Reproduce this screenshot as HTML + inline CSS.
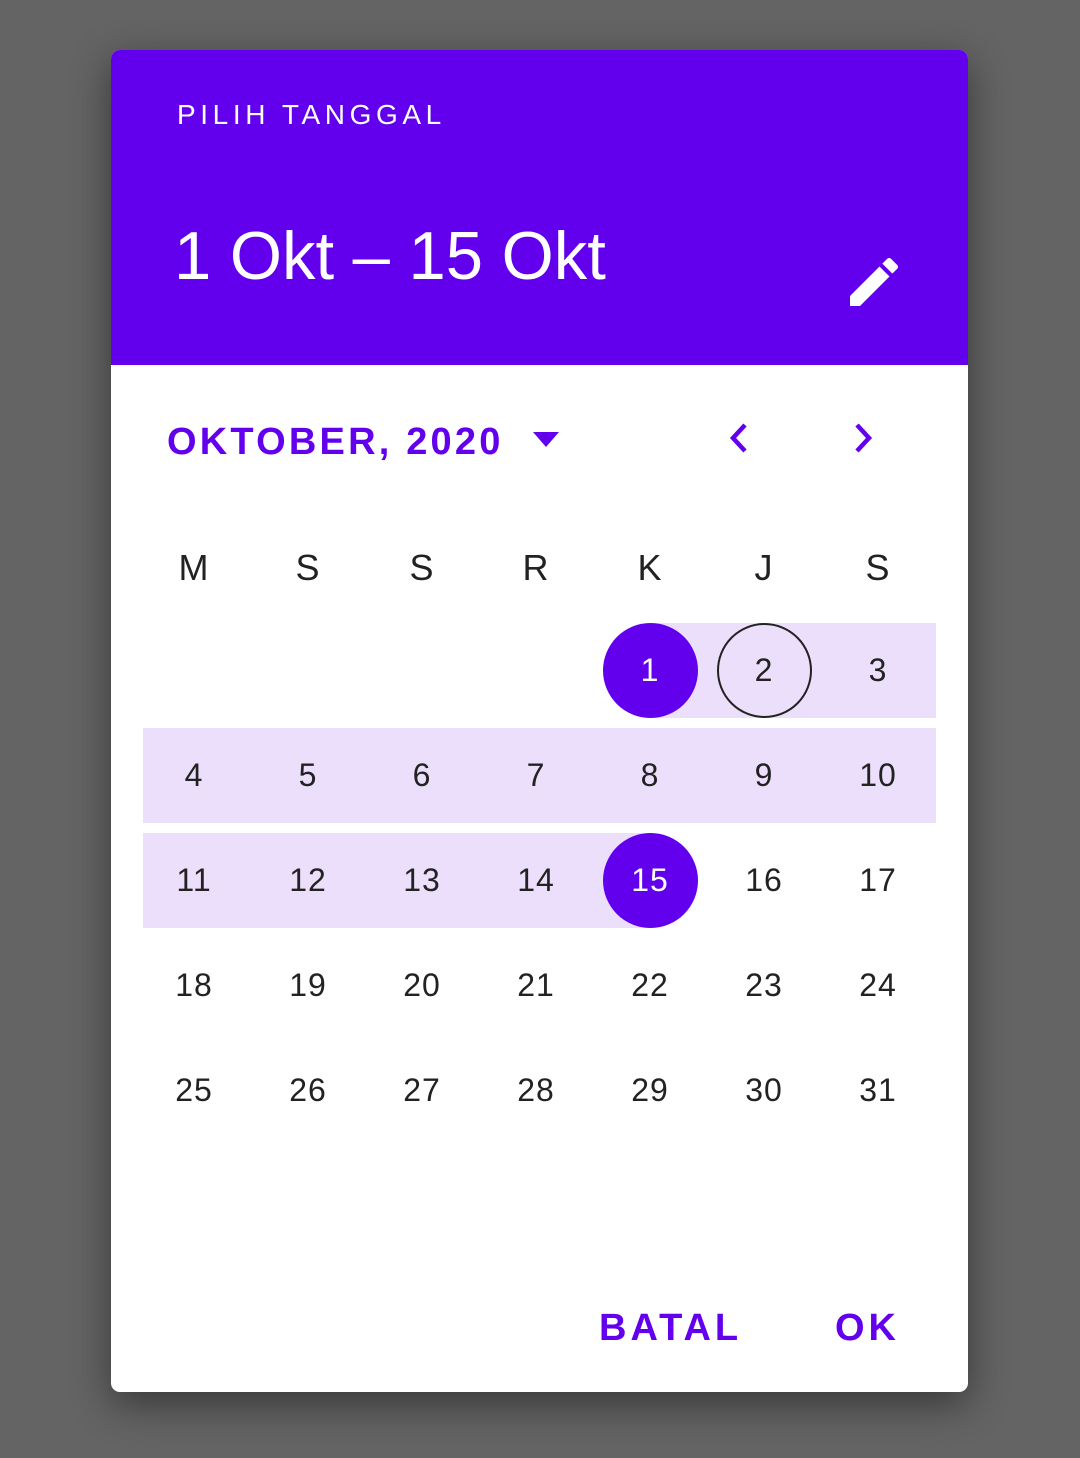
<!DOCTYPE html>
<html><head><meta charset="utf-8"><style>
*{margin:0;padding:0;box-sizing:border-box}
body{width:1080px;height:1458px;background:#646464;position:relative;overflow:hidden;font-family:"Liberation Sans",sans-serif}
.card{position:absolute;left:111px;top:50px;width:857px;height:1342px;background:#fff;border-radius:9px;overflow:hidden;box-shadow:0 12px 40px rgba(0,0,0,.45)}
.hdr{position:absolute;left:0;top:0;width:857px;height:315px;background:#6200EE}
.t{position:absolute;white-space:nowrap}
.cell{position:absolute;width:114px;height:95px;line-height:95px;text-align:center;font-size:32px;color:#222;letter-spacing:1px}
.band{position:absolute;height:95px;background:#ECDFFB}
.circ{position:absolute;width:95px;height:95px;border-radius:50%}
</style></head><body>
<div class="card">
 <div class="hdr">
  <div class="t" style="left:66px;top:45px;font-size:28px;line-height:40px;letter-spacing:4.6px;color:#fff">PILIH TANGGAL</div>
  <div class="t" style="left:63px;top:161px;font-size:68px;line-height:90px;color:#fff;transform:scaleX(0.985);transform-origin:left">1 Okt – 15 Okt</div>
  <svg class="t" style="left:731px;top:200px" width="64" height="64" viewBox="0 0 24 24"><path fill="#fff" d="M3 17.25V21h3.75L17.81 9.94l-3.75-3.75L3 17.25zM20.71 7.04c.39-.39.39-1.02 0-1.41l-2.34-2.34c-.39-.39-1.02-.39-1.41 0l-1.83 1.83 3.75 3.75 1.83-1.83z"/></svg>
 </div>
 <div class="t" style="left:56px;top:367px;font-size:38px;line-height:50px;font-weight:bold;letter-spacing:3.2px;color:#6200EE">OKTOBER, 2020</div>
 <svg class="t" style="left:422px;top:382px" width="26" height="16"><path d="M0 0h26L13 15z" fill="#6200EE"/></svg>
 <svg class="t" style="left:612px;top:372px" width="30" height="32"><path d="M22 3L10 16l12 13" stroke="#6200EE" stroke-width="4.5" fill="none"/></svg>
 <svg class="t" style="left:738px;top:372px" width="30" height="32"><path d="M8 3l12 13L8 29" stroke="#6200EE" stroke-width="4.5" fill="none"/></svg>

 <div class="band" style="left:539px;top:573px;width:286px"></div>
 <div class="band" style="left:32px;top:678px;width:793px"></div>
 <div class="band" style="left:32px;top:783px;width:507px"></div>
 <div class="circ" style="left:492px;top:573px;background:#6200EE"></div>
 <div class="circ" style="left:606px;top:573px;border:2.5px solid #222"></div>
 <div class="circ" style="left:492px;top:783px;background:#6200EE"></div>

 <div class="t" style="left:488px;top:1253px;font-size:38px;line-height:50px;font-weight:bold;letter-spacing:4px;color:#6200EE">BATAL</div>
 <div class="t" style="left:724px;top:1253px;font-size:38px;line-height:50px;font-weight:bold;letter-spacing:4px;color:#6200EE">OK</div>
</div>
<div style="position:absolute;left:111px;top:52px">
 <div class="cell" style="left:26px;top:468px;font-size:36px">M</div>
 <div class="cell" style="left:140px;top:468px;font-size:36px">S</div>
 <div class="cell" style="left:254px;top:468px;font-size:36px">S</div>
 <div class="cell" style="left:368px;top:468px;font-size:36px">R</div>
 <div class="cell" style="left:482px;top:468px;font-size:36px">K</div>
 <div class="cell" style="left:596px;top:468px;font-size:36px">J</div>
 <div class="cell" style="left:710px;top:468px;font-size:36px">S</div>

 <div class="cell" style="left:482px;top:571px;color:#fff">1</div>
 <div class="cell" style="left:596px;top:571px">2</div>
 <div class="cell" style="left:710px;top:571px">3</div>

 <div class="cell" style="left:26px;top:676px">4</div>
 <div class="cell" style="left:140px;top:676px">5</div>
 <div class="cell" style="left:254px;top:676px">6</div>
 <div class="cell" style="left:368px;top:676px">7</div>
 <div class="cell" style="left:482px;top:676px">8</div>
 <div class="cell" style="left:596px;top:676px">9</div>
 <div class="cell" style="left:710px;top:676px">10</div>

 <div class="cell" style="left:26px;top:781px">11</div>
 <div class="cell" style="left:140px;top:781px">12</div>
 <div class="cell" style="left:254px;top:781px">13</div>
 <div class="cell" style="left:368px;top:781px">14</div>
 <div class="cell" style="left:482px;top:781px;color:#fff">15</div>
 <div class="cell" style="left:596px;top:781px">16</div>
 <div class="cell" style="left:710px;top:781px">17</div>

 <div class="cell" style="left:26px;top:886px">18</div>
 <div class="cell" style="left:140px;top:886px">19</div>
 <div class="cell" style="left:254px;top:886px">20</div>
 <div class="cell" style="left:368px;top:886px">21</div>
 <div class="cell" style="left:482px;top:886px">22</div>
 <div class="cell" style="left:596px;top:886px">23</div>
 <div class="cell" style="left:710px;top:886px">24</div>

 <div class="cell" style="left:26px;top:991px">25</div>
 <div class="cell" style="left:140px;top:991px">26</div>
 <div class="cell" style="left:254px;top:991px">27</div>
 <div class="cell" style="left:368px;top:991px">28</div>
 <div class="cell" style="left:482px;top:991px">29</div>
 <div class="cell" style="left:596px;top:991px">30</div>
 <div class="cell" style="left:710px;top:991px">31</div>
</div>
</body></html>
